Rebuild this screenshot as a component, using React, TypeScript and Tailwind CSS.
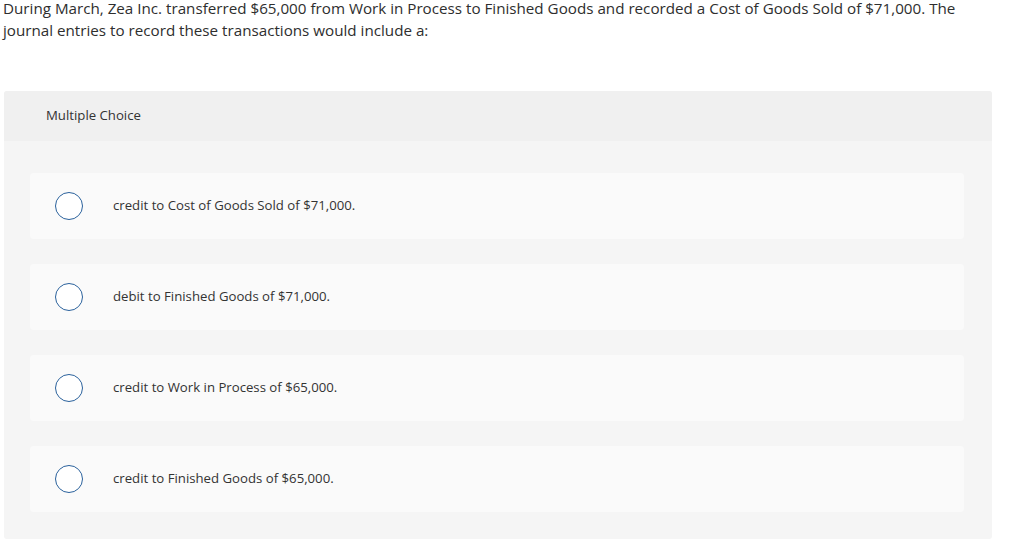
const OPTIONS = [
  'credit to Cost of Goods Sold of $71,000.',
  'debit to Finished Goods of $71,000.',
  'credit to Work in Process of $65,000.',
  'credit to Finished Goods of $65,000.',
];

function Radio() {
  return <span className="block w-[28px] h-[28px] shrink-0 rounded-full border-[1.5px] border-[#2a619c] bg-white" />;
}

export default function App() {
  return (
    <div className="w-[1022px] h-[557px] overflow-hidden bg-white text-[#2b2b2b] font-['Open_Sans',sans-serif]">
      <p className="-mt-[3px] pl-[3px] pr-[40px] text-[15.2px] leading-[22px] text-[#2e2e2e]">
        During March, Zea Inc. transferred $65,000 from Work in Process to Finished Goods and recorded a Cost of Goods Sold
        of $71,000. The journal entries to record these transactions would include a:
      </p>

      <div className="ml-[4px] mt-[50px] w-[988px] rounded-[3px] bg-[#f5f5f5]">
        <div className="h-[50px] flex items-center pl-[42px] bg-[#f0f0f0] rounded-t-[3px] text-[13.2px] text-[#333]">
          Multiple Choice
        </div>
        <div className="flex flex-col gap-[25px] pl-[26px] pr-[28px] pt-[32px] pb-[27px]">
          {OPTIONS.map((opt) => (
            <div key={opt} className="h-[66px] flex items-center rounded-[4px] bg-[#fafafa] pl-[25px]">
              <Radio />
              <span className="ml-[30px] text-[13.2px] text-[#333]">{opt}</span>
            </div>
          ))}
        </div>
      </div>
    </div>
  );
}
